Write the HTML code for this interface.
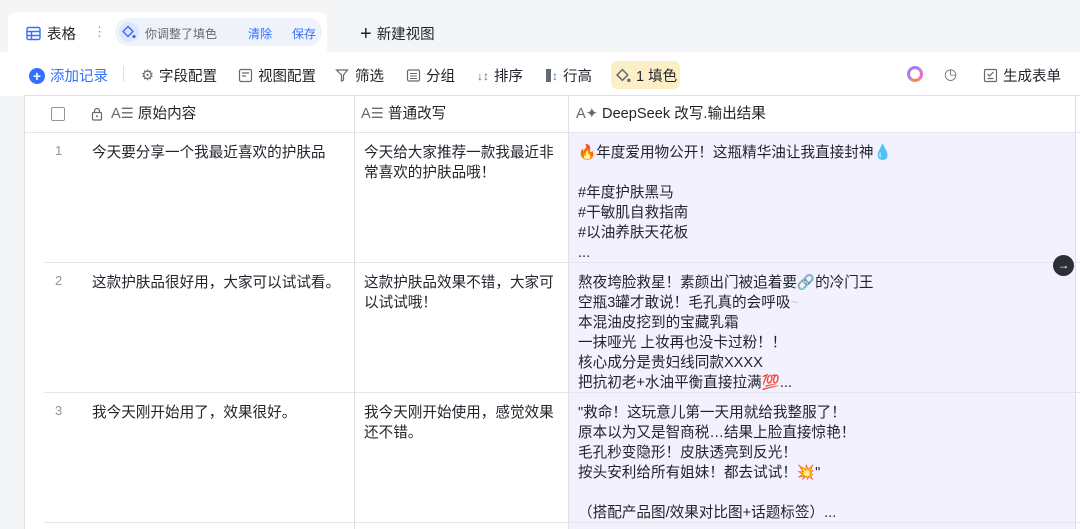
<!DOCTYPE html>
<html><head><meta charset="utf-8"><style>
*{margin:0;padding:0;box-sizing:border-box}
body{width:1080px;height:529px;overflow:hidden;background:#f4f5f7;font-family:"Liberation Sans","Noto Sans CJK SC",sans-serif;color:#1f2329;position:relative;font-size:14px}
.abs{position:absolute}
.tab{left:8px;top:12px;width:319px;height:42px;background:#fff;border-radius:8px 8px 0 0}
.tool{left:0;top:52px;width:1080px;height:44px;background:#fff}
.ti{position:absolute;top:65px;font-size:14.5px;display:flex;align-items:center;gap:5px;white-space:nowrap}
.table{left:24px;top:95px;width:1056px;height:434px;background:#fff;border-left:1px solid #dee0e3;border-top:1px solid #dee0e3}
.vl{position:absolute;top:96px;width:1px;height:433px;background:#dee0e3}
.hl{position:absolute;height:1px;background:#e4e6e9}
.cell{position:absolute;font-size:14.6px;line-height:20px;white-space:nowrap}
.num{position:absolute;left:55px;color:#8f959e;font-size:13px}
svg{display:block}
</style></head><body>
<div class="abs tab"></div>
<div class="abs" style="left:26px;top:23px;display:flex;align-items:center;gap:6px;font-size:14.5px">
<svg width="15" height="15" viewBox="0 0 15 15"><rect x="1" y="1.5" width="13" height="12" rx="1.5" fill="none" stroke="#3370ff" stroke-width="1.4"/><path d="M1 5.5h13M1 9.5h13M5.5 5.5v8" stroke="#3370ff" stroke-width="1.4"/></svg>表格</div>
<div class="abs" style="left:93px;top:24px;color:#8f959e;font-size:13px">⋮</div>
<div class="abs" style="left:115px;top:18px;width:207px;height:28px;background:#eef2fb;border-radius:14px"></div>
<div class="abs" style="left:119px;top:22px;width:20px;height:20px;border-radius:10px;background:#dfe6f9"></div>
<svg class="abs" style="left:122px;top:25px" width="14" height="14" viewBox="0 0 14 14"><path d="M6 1.5L11 6.5 6 11.5 1 6.5z" fill="none" stroke="#3370ff" stroke-width="1.5"/><circle cx="12" cy="11.5" r="1.6" fill="#3370ff"/></svg>
<div class="abs" style="left:145px;top:25px;font-size:12px;color:#646a73">你调整了填色</div>
<div class="abs" style="left:248px;top:25px;font-size:12px;color:#3370ff">清除</div>
<div class="abs" style="left:292px;top:25px;font-size:12px;color:#3370ff">保存</div>
<div class="abs" style="left:360px;top:23px;font-size:14.5px;display:flex;gap:5px;align-items:center"><span style="font-size:20px;line-height:16px;font-weight:300">+</span>新建视图</div>

<div class="abs tool"></div>
<div class="ti" style="left:29px;color:#3370ff"><span style="width:16px;height:16px;border-radius:8px;background:#3370ff;color:#fff;font-size:14px;line-height:16px;text-align:center;font-weight:bold">+</span>添加记录</div>
<div class="abs" style="left:123px;top:66px;width:1px;height:16px;background:#dee0e3"></div>
<div class="ti" style="left:141px"><span style="color:#646a73">⚙</span>字段配置</div>
<div class="ti" style="left:238px"><svg width="15" height="15" viewBox="0 0 15 15"><rect x="1.5" y="1.5" width="12" height="12" rx="1.5" fill="none" stroke="#646a73" stroke-width="1.2"/><path d="M4 5h7M4 8h4" stroke="#646a73" stroke-width="1.2"/></svg>视图配置</div>
<div class="ti" style="left:335px"><svg width="15" height="15" viewBox="0 0 15 15"><path d="M1.5 2h11L8.5 7v5l-2 1V7z" fill="none" stroke="#646a73" stroke-width="1.2"/></svg>筛选</div>
<div class="ti" style="left:406px"><svg width="15" height="15" viewBox="0 0 15 15"><rect x="1.5" y="2" width="12" height="11" rx="1.5" fill="none" stroke="#646a73" stroke-width="1.2"/><path d="M4 5.5h7M4 8h7M4 10.5h7" stroke="#646a73" stroke-width="1.1"/></svg>分组</div>
<div class="ti" style="left:477px"><span style="color:#646a73;font-size:12px">↓&#8597;</span>排序</div>
<div class="ti" style="left:546px"><span style="display:inline-block;width:5px;height:13px;background:#646a73"></span><span style="color:#646a73;font-size:12px;margin-left:-4px">↕</span>行高</div>
<div class="abs" style="left:611px;top:61px;width:69px;height:28px;background:#fcefc8;border-radius:6px"></div>
<div class="ti" style="left:616px"><svg width="15" height="15" viewBox="0 0 14 14"><path d="M6 1.5L11 6.5 6 11.5 1 6.5z" fill="none" stroke="#646a73" stroke-width="1.4"/><circle cx="12" cy="11.5" r="1.6" fill="#646a73"/></svg>1 填色</div>
<div class="abs" style="left:907px;top:66px;width:16px;height:16px;border-radius:8px;border:3.5px solid #a67cf5;border-bottom-color:#f08a5d;border-right-color:#e86bd0"></div>
<div class="ti" style="left:944px;color:#646a73;font-size:15px">◷</div>
<div class="ti" style="left:983px"><svg width="15" height="15" viewBox="0 0 15 15"><rect x="1.5" y="1.5" width="12" height="12" rx="1" fill="none" stroke="#646a73" stroke-width="1.2"/><path d="M4.5 6l2 2 4-4M4.5 10.5h6" stroke="#646a73" stroke-width="1.2" fill="none"/></svg>生成表单</div>

<div class="abs table"></div>
<div class="abs" style="left:569px;top:133px;width:506px;height:396px;background:#f3f1fd"></div>
<div class="vl" style="left:354px"></div>
<div class="vl" style="left:568px"></div>
<div class="vl" style="left:1075px"></div>
<div class="hl" style="left:25px;top:132px;width:1055px"></div>
<div class="hl" style="left:44px;top:262px;width:1036px"></div>
<div class="hl" style="left:44px;top:392px;width:1036px"></div>
<div class="hl" style="left:44px;top:522px;width:1036px"></div>

<div class="abs" style="left:51px;top:107px;width:14px;height:14px;border:1.5px solid #8f959e;border-radius:2px"></div>
<svg class="abs" style="left:91px;top:107px" width="12" height="14" viewBox="0 0 12 14"><rect x="1.5" y="5.5" width="9" height="7.5" rx="1" fill="none" stroke="#646a73" stroke-width="1.2"/><path d="M3.5 5.5V4a2.5 2.5 0 0 1 5 0v1.5" fill="none" stroke="#646a73" stroke-width="1.2"/><circle cx="6" cy="9.2" r="1" fill="#646a73"/></svg>
<div class="cell" style="left:111px;top:104px"><span style="color:#646a73">A☰</span> 原始内容</div>
<div class="cell" style="left:361px;top:104px"><span style="color:#646a73">A☰</span> 普通改写</div>
<div class="cell" style="left:576px;top:104px"><span style="color:#646a73">A✦</span> DeepSeek 改写.输出结果</div>

<div class="num" style="top:143px">1</div>
<div class="num" style="top:273px">2</div>
<div class="num" style="top:403px">3</div>
<div class="cell" style="left:92px;top:143px">今天要分享一个我最近喜欢的护肤品</div>
<div class="cell" style="left:92px;top:273px">这款护肤品很好用，大家可以试试看。</div>
<div class="cell" style="left:92px;top:403px">我今天刚开始用了，效果很好。</div>
<div class="cell" style="left:364px;top:143px">今天给大家推荐一款我最近非<br>常喜欢的护肤品哦！</div>
<div class="cell" style="left:364px;top:273px">这款护肤品效果不错，大家可<br>以试试哦！</div>
<div class="cell" style="left:364px;top:403px">我今天刚开始使用，感觉效果<br>还不错。</div>
<div class="cell" style="left:578px;top:143px">🔥年度爱用物公开！这瓶精华油让我直接封神💧<br><br>#年度护肤黑马<br>#干敏肌自救指南<br>#以油养肤天花板<br>...</div>
<div class="cell" style="left:578px;top:273px">熬夜垮脸救星！素颜出门被追着要🔗的冷门王<br>空瓶3罐才敢说！毛孔真的会呼吸<span style="color:#ccc">~</span><br>本混油皮挖到的宝藏乳霜<br>一抹哑光 上妆再也没卡过粉！！<br>核心成分是贵妇线同款XXXX<br>把抗初老+水油平衡直接拉满💯...</div>
<div class="cell" style="left:578px;top:403px">"救命！这玩意儿第一天用就给我整服了！<br>原本以为又是智商税…结果上脸直接惊艳！<br>毛孔秒变隐形！皮肤透亮到反光！<br>按头安利给所有姐妹！都去试试！💥"<br><br>（搭配产品图/效果对比图+话题标签）...</div>
<div class="abs" style="left:1053px;top:255px;width:21px;height:21px;border-radius:11px;background:#2b2f36;color:#fff;font-size:12px;text-align:center;line-height:21px">→</div>
</body></html>
